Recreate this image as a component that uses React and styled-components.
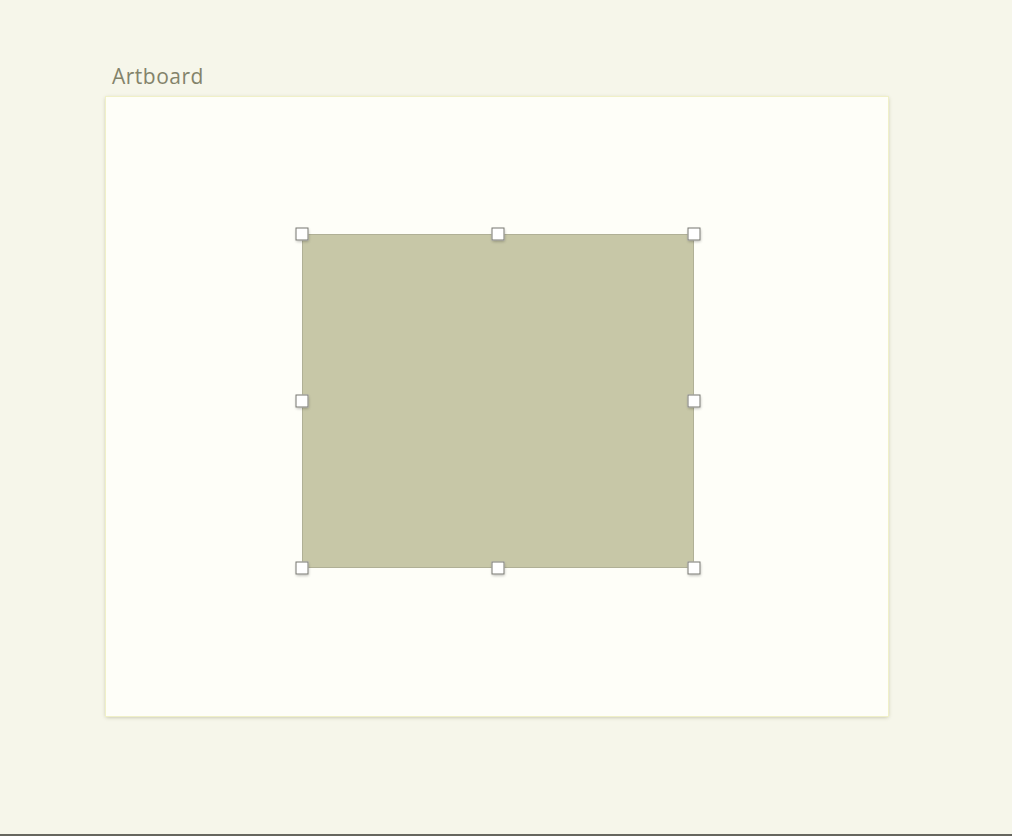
import styled, { createGlobalStyle } from "styled-components";

const GlobalStyle = createGlobalStyle`
  html, body {
    margin: 0;
    padding: 0;
    background: #f6f6ea;
  }
  body {
    font-family: "Open Sans", "Liberation Sans", sans-serif;
  }
`;

const Canvas = styled.div`
  width: 1012px;
  height: 836px;
  box-sizing: border-box;
  padding: 61px 0 0 106px;
  border-bottom: 2px solid #66665e;
  background: #f6f6ea;
`;

const Label = styled.div`
  font-size: 21px;
  line-height: 30px;
  color: #83836a;
  padding-left: 6px;
  letter-spacing: 0.5px;
  margin-bottom: 6px;
`;

const Board = styled.div`
  position: relative;
  width: 782px;
  height: 619px;
  background: #fefef8;
  box-shadow: 0 0 0 1px #f0f0c8, 0 1px 4px rgba(90, 90, 40, 0.4);
`;

const Shape = styled.div`
  position: absolute;
  left: 196px;
  top: 137px;
  width: 392px;
  height: 334px;
  background: #c7c7a7;
  box-shadow: inset 0 0 0 1px #b0b096;
`;

const Handle = styled.span`
  position: absolute;
  width: 13px;
  height: 13px;
  box-sizing: border-box;
  background: #ffffff;
  border: 1px solid #77776f;
  box-shadow: 0 1px 3px rgba(0, 0, 0, 0.3);
  left: ${(p) => p.$x}%;
  top: ${(p) => p.$y}%;
  transform: translate(-50%, -50%);
`;

const handles = [
  [0, 0], [50, 0], [100, 0],
  [0, 50], [100, 50],
  [0, 100], [50, 100], [100, 100],
];

export default function App() {
  return (
    <>
      <GlobalStyle />
      <Canvas>
        <Label>Artboard</Label>
        <Board>
          <Shape>
            {handles.map(([x, y]) => (
              <Handle key={`${x}-${y}`} $x={x} $y={y} />
            ))}
          </Shape>
        </Board>
      </Canvas>
    </>
  );
}
